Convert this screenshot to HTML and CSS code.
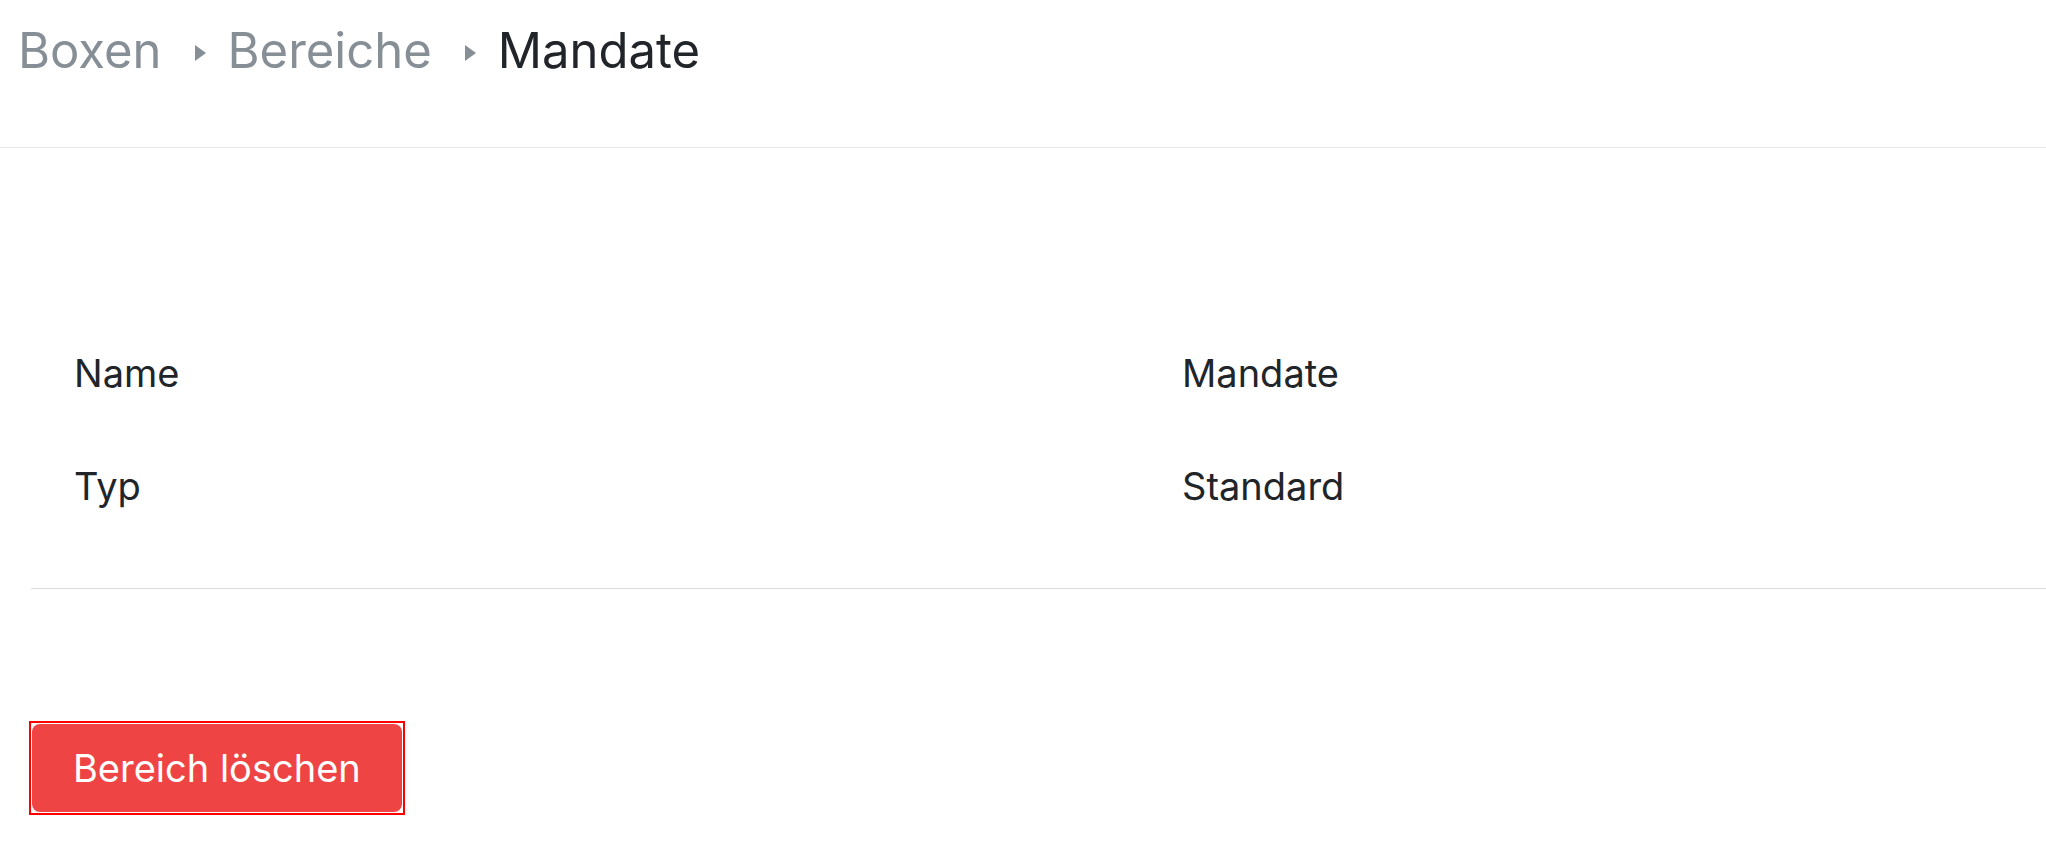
FILE: index.html
```html
<!DOCTYPE html>
<html lang="de">
<head>
  <meta charset="UTF-8" />
  <meta name="viewport" content="width=device-width, initial-scale=1.0" />
  <title>Mandate</title>
  <link rel="stylesheet" href="styles.css">
</head>
<body>
  <header class="topbar">
    <nav class="crumbs">
      <a class="crumb" href="#">Boxen</a>
      <span class="caret"></span>
      <a class="crumb" href="#">Bereiche</a>
      <span class="caret"></span>
      <span class="crumb current">Mandate</span>
    </nav>
  </header>

  <main class="content">
    <dl class="details">
      <div class="row">
        <dt>Name</dt>
        <dd>Mandate</dd>
      </div>
      <div class="row">
        <dt>Typ</dt>
        <dd>Standard</dd>
      </div>
    </dl>
    <div class="actions">
      <span class="focus-frame">
        <button class="btn-danger" type="button">Bereich löschen</button>
      </span>
    </div>
  </main>
</body>
</html>
```

FILE: styles.css
```css
body {
  margin: 0;
  font-family: Inter, "Noto Sans", sans-serif;
  color: #212529;
  background: #fff;
}
.topbar {
  height: 148px;
  box-sizing: border-box;
  padding: 22px 18px;
  border-bottom: 1px solid #e5e7eb;
}
.crumbs {
  display: flex;
  align-items: center;
  font-size: 49px;
  line-height: 58px;
}
.crumb {
  color: #868e96;
  text-decoration: none;
}
.crumb.current {
  color: #212529;
}
.caret {
  width: 0;
  height: 0;
  margin: 3px 22px 0 33px;
  border-top: 8px solid transparent;
  border-bottom: 8px solid transparent;
  border-left: 11px solid #868e96;
}
.content {
  padding-left: 31px;
}
.details {
  margin: 168px 0 0;
  padding: 0 0 46px;
  border-bottom: 1px solid #dcdcdc;
  font-size: 38px;
}
.row {
  display: grid;
  grid-template-columns: 1108px 1fr;
  align-items: center;
  height: 113px;
  padding-left: 43px;
}
.row dt,
.row dd {
  margin: 0;
}
.actions {
  padding: 132px 0 0 0;
}
.focus-frame {
  display: inline-block;
  margin-left: -2px;
  padding: 1px;
  border: 2px solid #ff0000;
  line-height: 0;
}
.btn-danger {
  height: 88px;
  padding: 0 41px;
  font-family: inherit;
  font-size: 38px;
  line-height: 1;
  color: #fff;
  background: #ef4444;
  border: none;
  border-radius: 8px;
  cursor: pointer;
}
```
